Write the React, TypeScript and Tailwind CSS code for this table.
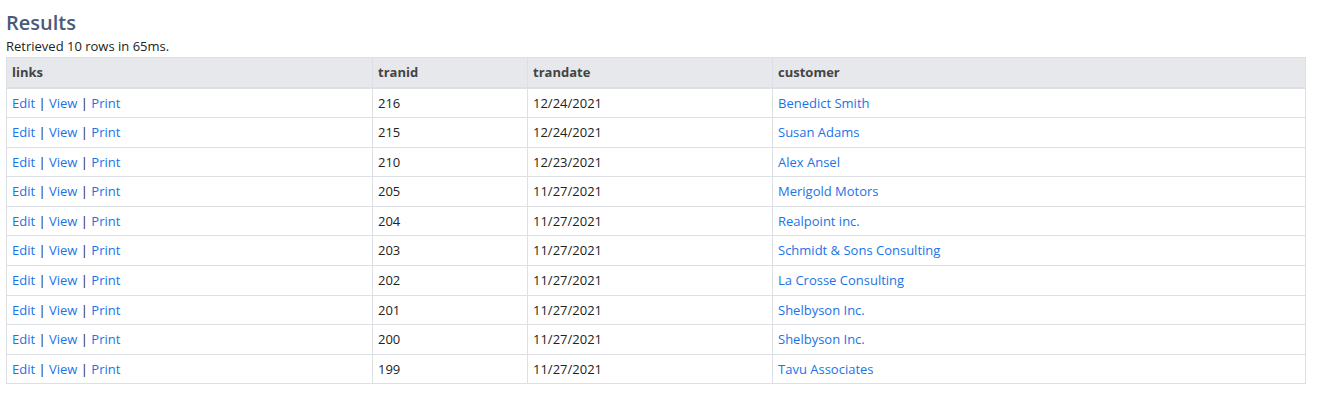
import React from 'react';

const rows = [
  { id: '216', date: '12/24/2021', customer: 'Benedict Smith' },
  { id: '215', date: '12/24/2021', customer: 'Susan Adams' },
  { id: '210', date: '12/23/2021', customer: 'Alex Ansel' },
  { id: '205', date: '11/27/2021', customer: 'Merigold Motors' },
  { id: '204', date: '11/27/2021', customer: 'Realpoint inc.' },
  { id: '203', date: '11/27/2021', customer: 'Schmidt & Sons Consulting' },
  { id: '202', date: '11/27/2021', customer: 'La Crosse Consulting' },
  { id: '201', date: '11/27/2021', customer: 'Shelbyson Inc.' },
  { id: '200', date: '11/27/2021', customer: 'Shelbyson Inc.' },
  { id: '199', date: '11/27/2021', customer: 'Tavu Associates' },
];

const cell = 'px-[5px] py-[5px] border border-[#dcdfe3] text-left align-top';

export default function App() {
  return (
    <div className="bg-white min-h-screen px-[6px] pt-[9px] text-[13px] leading-[1.428571] text-[#222] font-['Open_Sans',sans-serif]">
      <h1 className="text-[20px] leading-[28px] text-[#4a5a78] font-semibold">Results</h1>
      <p className="mb-[2px] leading-[18px]">Retrieved 10 rows in 65ms.</p>
      <table className="w-[1300px] table-fixed border-collapse border border-[#dcdfe3]">
        <thead>
          <tr className="bg-[#e6e8ec]">
            <th className={`${cell} w-[366px] font-bold text-[#444] border-b-2`}>links</th>
            <th className={`${cell} w-[155px] font-bold text-[#444] border-b-2`}>tranid</th>
            <th className={`${cell} w-[245px] font-bold text-[#444] border-b-2`}>trandate</th>
            <th className={`${cell} font-bold text-[#444] border-b-2`}>customer</th>
          </tr>
        </thead>
        <tbody>
          {rows.map((r) => (
            <tr key={r.id}>
              <td className={cell}>
                <a className="text-[#1a73e8]">Edit</a> | <a className="text-[#1a73e8]">View</a> |{' '}
                <a className="text-[#1a73e8]">Print</a>
              </td>
              <td className={cell}>{r.id}</td>
              <td className={cell}>{r.date}</td>
              <td className={cell}>
                <a className="text-[#1a73e8]">{r.customer}</a>
              </td>
            </tr>
          ))}
        </tbody>
      </table>
    </div>
  );
}
